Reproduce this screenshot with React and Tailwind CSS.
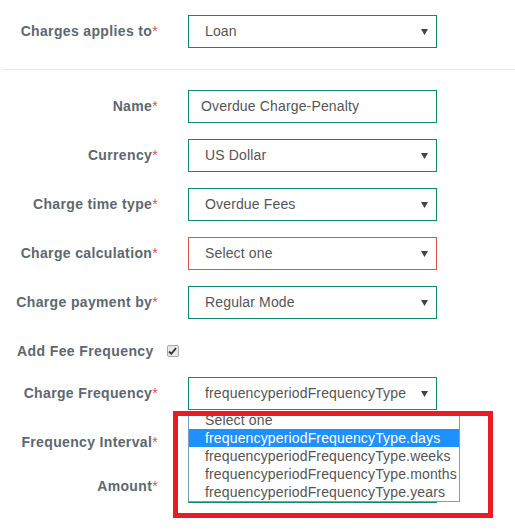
import React from "react";

const font = { fontFamily: '"Liberation Sans", Arial, sans-serif' };

function Label({ children, required = true }) {
  return (
    <div className="w-[158px] text-right text-[14px] font-bold text-[#5d6870] tracking-[0.35px]">
      {children}
      {required && <span className="font-normal text-[#d9534f]">*</span>}
    </div>
  );
}

function Arrow() {
  return (
    <svg width="7" height="6" viewBox="0 0 7 6" className="absolute right-[8px] top-[13px]">
      <path d="M0 0 H7 L3.5 6 Z" fill="#444" />
    </svg>
  );
}

function Select({ value, error }) {
  return (
    <div
      className={
        "relative h-[33px] w-[249px] border bg-white pl-[16px] flex items-center text-[14px] text-[#555] tracking-[0.15px] " +
        (error ? "border-[#dc5548]" : "border-[#108a6d]")
      }
    >
      {value}
      <Arrow />
    </div>
  );
}

function Input({ value }) {
  return (
    <div className="h-[33px] w-[249px] border border-[#108a6d] bg-white pl-[12px] flex items-center text-[14px] text-[#555] tracking-[0.15px]">
      {value}
    </div>
  );
}

function Row({ label, children, className = "" }) {
  return (
    <div className={"flex items-center gap-[30px] " + className}>
      <Label>{label}</Label>
      {children}
    </div>
  );
}

const options = [
  "frequencyperiodFrequencyType.days",
  "frequencyperiodFrequencyType.weeks",
  "frequencyperiodFrequencyType.months",
  "frequencyperiodFrequencyType.years",
];

export default function App() {
  return (
    <div className="w-[515px] h-[531px] bg-white overflow-hidden" style={font}>
      <Row label="Charges applies to" className="pt-[15px]">
        <Select value="Loan" />
      </Row>

      <div className="ml-[3px] mt-[21px] h-px bg-[#e8e8e8]" />

      <div className="mt-[20px] flex flex-col gap-[16px]">
        <Row label="Name">
          <Input value="Overdue Charge-Penalty" />
        </Row>
        <Row label="Currency">
          <Select value="US Dollar" />
        </Row>
        <Row label="Charge time type">
          <Select value="Overdue Fees" />
        </Row>
        <Row label="Charge calculation">
          <Select value="Select one" error />
        </Row>
        <Row label="Charge payment by">
          <Select value="Regular Mode" />
        </Row>
      </div>

      <div className="mt-[16px] h-[32px] flex items-center pl-[17px]">
        <span className="text-[14px] font-bold text-[#5d6870] tracking-[0.4px]">Add Fee Frequency</span>
        <span className="ml-[13px] w-[12px] h-[12px] rounded-[2px] border border-[#a9a9a9] bg-[#e9e9e9] flex items-center justify-center">
          <svg width="9" height="8" viewBox="0 0 9 8">
            <path d="M1 4.5 L3.3 6.8 L8 1.2" stroke="#333" strokeWidth="1.8" fill="none" />
          </svg>
        </span>
      </div>

      <Row label="Charge Frequency" className="mt-[10px]">
        <div className="relative">
          <Select value="frequencyperiodFrequencyType" />
          <div className="absolute left-0 top-[34px] z-10 w-[272px] h-[91px] border border-[#7f9db9] bg-white text-[14px] text-[#555] tracking-[0.15px]">
            <div className="h-[18px] pl-[16px] leading-[18px] -mt-px">Select one</div>
            {options.map((o, i) => (
              <div
                key={o}
                className={
                  "h-[18px] pl-[16px] leading-[18px] " + (i === 0 ? "bg-[#1e90ff] text-white" : "")
                }
              >
                {o}
              </div>
            ))}
          </div>
          <div className="absolute left-[-15px] top-[34px] z-20 w-[320px] h-[107px] border-[5px] border-[#e81c25] pointer-events-none" />
        </div>
      </Row>

      <Row label="Frequency Interval" className="mt-[16px]">
        <Input value="" />
      </Row>

      <Row label="Amount" className="mt-[11px]">
        <Input value="" />
      </Row>
    </div>
  );
}
